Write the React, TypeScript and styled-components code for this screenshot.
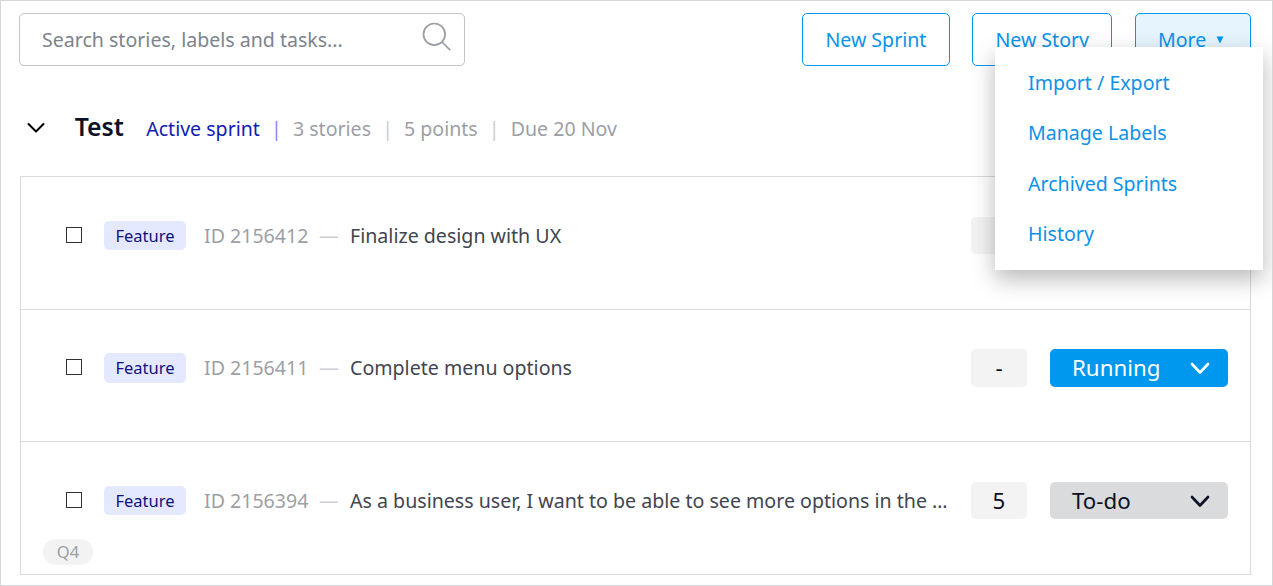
import React from "react";
import styled, { createGlobalStyle } from "styled-components";

const GlobalStyle = createGlobalStyle`
  * { box-sizing: border-box; }
  body {
    margin: 0;
    background: #fff;
    font-family: "Noto Sans", sans-serif;
    font-size: 19.57px;
  }
  button, input { font: inherit; }
`;

const Page = styled.main`
  width: 1273px;
  height: 586px;
  overflow: hidden;
  border: 1px solid #d5d6d7;
  padding: 12px 21px 0 18px;
`;

const Toolbar = styled.header`
  display: flex;
  align-items: center;
  height: 53px;
`;

const SearchBox = styled.label`
  display: flex;
  align-items: center;
  width: 446px;
  height: 53px;
  padding: 0 12px 0 22px;
  border: 1px solid #c2c4c8;
  border-radius: 5px;
  svg { flex: none; margin-top: -6px; }
`;

const SearchInput = styled.input`
  flex: 1;
  min-width: 0;
  height: 27px;
  padding: 0;
  border: 0;
  outline: 0;
  color: #7d838c;
  background: transparent;
  &::placeholder { color: #7d838c; opacity: 1; }
`;

const Actions = styled.div`
  position: relative;
  display: flex;
  margin-left: auto;
`;

const ActionButton = styled.button<{ $width: number; $gap?: number; $active?: boolean }>`
  display: flex;
  align-items: center;
  width: ${(p) => p.$width}px;
  height: 53px;
  margin-left: ${(p) => p.$gap ?? 0}px;
  padding: 0 0 0 ${(p) => (p.$active ? 22 : 22.4)}px;
  border: 1px solid #0097ee;
  border-radius: 5px;
  color: #0b92e9;
  background: ${(p) => (p.$active ? "#e5f4fd" : "#fff")};
  white-space: nowrap;
  svg { margin: 0 0 0 9.4px; }
`;

const Menu = styled.nav`
  position: absolute;
  z-index: 2;
  top: 34px;
  right: -12px;
  width: 268px;
  height: 223px;
  padding: 11px 0 0 33px;
  background: #fff;
  box-shadow: 0 9px 22px rgba(0, 0, 0, 0.28);
`;

const MenuItem = styled.a`
  display: block;
  height: 50.4px;
  line-height: 50.4px;
  color: #0b92e9;
`;

const SprintHeader = styled.section`
  display: flex;
  align-items: center;
  height: 53px;
  margin: 36px 0 21px;
  padding-left: 8px;
  svg { flex: none; margin-top: -2px; }
`;

const SprintName = styled.h2`
  width: 50px;
  margin: -5px 21.5px 0 29.7px;
  font-size: 24.8px;
  font-weight: 600;
  color: #0c1226;
`;

const SprintFacts = styled.div`
  display: flex;
  align-items: center;
  white-space: nowrap;
  color: #9c9fa5;
`;

const Active = styled.span`
  color: #0e1db5;
`;

const Divider = styled.span<{ $active?: boolean }>`
  width: 33px;
  text-align: center;
  color: ${(p) => (p.$active ? "#8e86e4" : "#cccfd5")};
`;

const StoryList = styled.section`
  width: 1231px;
  height: 399px;
  margin-left: 1px;
  border: 1px solid #d9dadb;
  border-bottom: 0;
`;

const Story = styled.article`
  height: 132.67px;
  padding: 39.6px 22px 0;
  border-bottom: 1px solid #d9dadb;
`;

const StoryLine = styled.div`
  display: flex;
  align-items: center;
  height: 37.4px;
`;

const Checkbox = styled.span`
  flex: none;
  width: 16px;
  height: 16px;
  margin: -1px 22px 0 23px;
  border: 1px solid #303030;
`;

const Kind = styled.span`
  flex: none;
  width: 82px;
  height: 29.4px;
  border-radius: 5px;
  font-size: 16.5px;
  line-height: 29.4px;
  text-align: center;
  color: #10107c;
  background: #e5e9ff;
`;

const StoryId = styled.span`
  flex: none;
  width: 115px;
  margin-left: 18px;
  color: #9c9fa5;
`;

const Dash = styled.span`
  flex: none;
  width: 31px;
  color: #ccced2;
`;

const Title = styled.span`
  font-size: 19.6px;
  white-space: nowrap;
  color: #41454f;
`;

const Points = styled.span`
  flex: none;
  width: 56px;
  height: 37.4px;
  margin-left: auto;
  border-radius: 5px;
  font-size: 22.3px;
  line-height: 37.4px;
  text-align: center;
  color: #0c1226;
  background: #f3f3f3;
`;

const Status = styled.button<{ $running?: boolean }>`
  display: flex;
  flex: none;
  align-items: center;
  justify-content: space-between;
  width: 178px;
  height: 37.4px;
  margin-left: 23px;
  padding: 0 18px 0 22px;
  border: 0;
  border-radius: 5px;
  font-size: 22.3px;
  line-height: 35px;
  color: ${(p) => (p.$running ? "#fff" : "#0c1226")};
  background: ${(p) => (p.$running ? "#0097ee" : "#dadbdd")};
  span { margin-top: -1px; }
`;

const Label = styled.span`
  display: block;
  width: 50px;
  height: 26px;
  margin-top: 20px;
  border-radius: 13px;
  font-size: 16.5px;
  line-height: 26px;
  text-align: center;
  color: #9c9fa5;
  background: #f3f3f3;
`;

const Chevron = () => (
  <svg width="20" height="14" viewBox="0 0 20 14" fill="none" stroke="currentColor" strokeWidth="2.6" strokeLinecap="round" strokeLinejoin="round">
    <path d="M2 3 10 11.5 18 3" />
  </svg>
);

interface StoryData {
  id: string;
  title: string;
  points?: string;
  status?: string;
  label?: string;
}

const stories: StoryData[] = [
  { id: "2156412", title: "Finalize design with UX" },
  { id: "2156411", title: "Complete menu options", points: "-", status: "Running" },
  {
    id: "2156394",
    title: "As a business user, I want to be able to see more options in the …",
    points: "5",
    status: "To-do",
    label: "Q4",
  },
];

const menuItems = ["Import / Export", "Manage Labels", "Archived Sprints", "History"];

export default function App() {
  return (
    <>
      <GlobalStyle />
      <Page>
        <Toolbar>
          <SearchBox>
            <SearchInput placeholder="Search stories, labels and tasks..." />
            <svg width="30" height="30" viewBox="0 0 30 30" fill="none" stroke="#9a9ea4" strokeWidth="1.7">
              <circle cx="12.3" cy="12.3" r="10.8" />
              <path d="m20 20 8.2 8.2" />
            </svg>
          </SearchBox>
          <Actions>
            <ActionButton $width={148}>New Sprint</ActionButton>
            <ActionButton $width={140} $gap={22}>New Story</ActionButton>
            <ActionButton $width={116} $gap={23} $active>
              More
              <svg width="8" height="8" viewBox="0 0 8 8"><path d="M.5.5h7L4 7.5z" fill="#0097ee" /></svg>
            </ActionButton>
            <Menu>
              {menuItems.map((item) => <MenuItem key={item}>{item}</MenuItem>)}
            </Menu>
          </Actions>
        </Toolbar>

        <SprintHeader>
          <svg width="18" height="12" viewBox="0 0 18 12" fill="none" stroke="#000" strokeWidth="2" strokeLinecap="round" strokeLinejoin="round">
            <path d="M1.5 2 9 9.5 16.5 2" />
          </svg>
          <SprintName>Test</SprintName>
          <SprintFacts>
            <Active>Active sprint</Active>
            <Divider $active>|</Divider>
            <span>3 stories</span>
            <Divider>|</Divider>
            <span>5 points</span>
            <Divider>|</Divider>
            <span>Due 20 Nov</span>
          </SprintFacts>
        </SprintHeader>

        <StoryList>
          {stories.map((story) => (
            <Story key={story.id}>
              <StoryLine>
                <Checkbox />
                <Kind>Feature</Kind>
                <StoryId>ID {story.id}</StoryId>
                <Dash>—</Dash>
                <Title>{story.title}</Title>
                <Points>{story.points}</Points>
                <Status $running={story.status === "Running"}>
                  <span>{story.status}</span>
                  <Chevron />
                </Status>
              </StoryLine>
              {story.label && <Label>{story.label}</Label>}
            </Story>
          ))}
        </StoryList>
      </Page>
    </>
  );
}
